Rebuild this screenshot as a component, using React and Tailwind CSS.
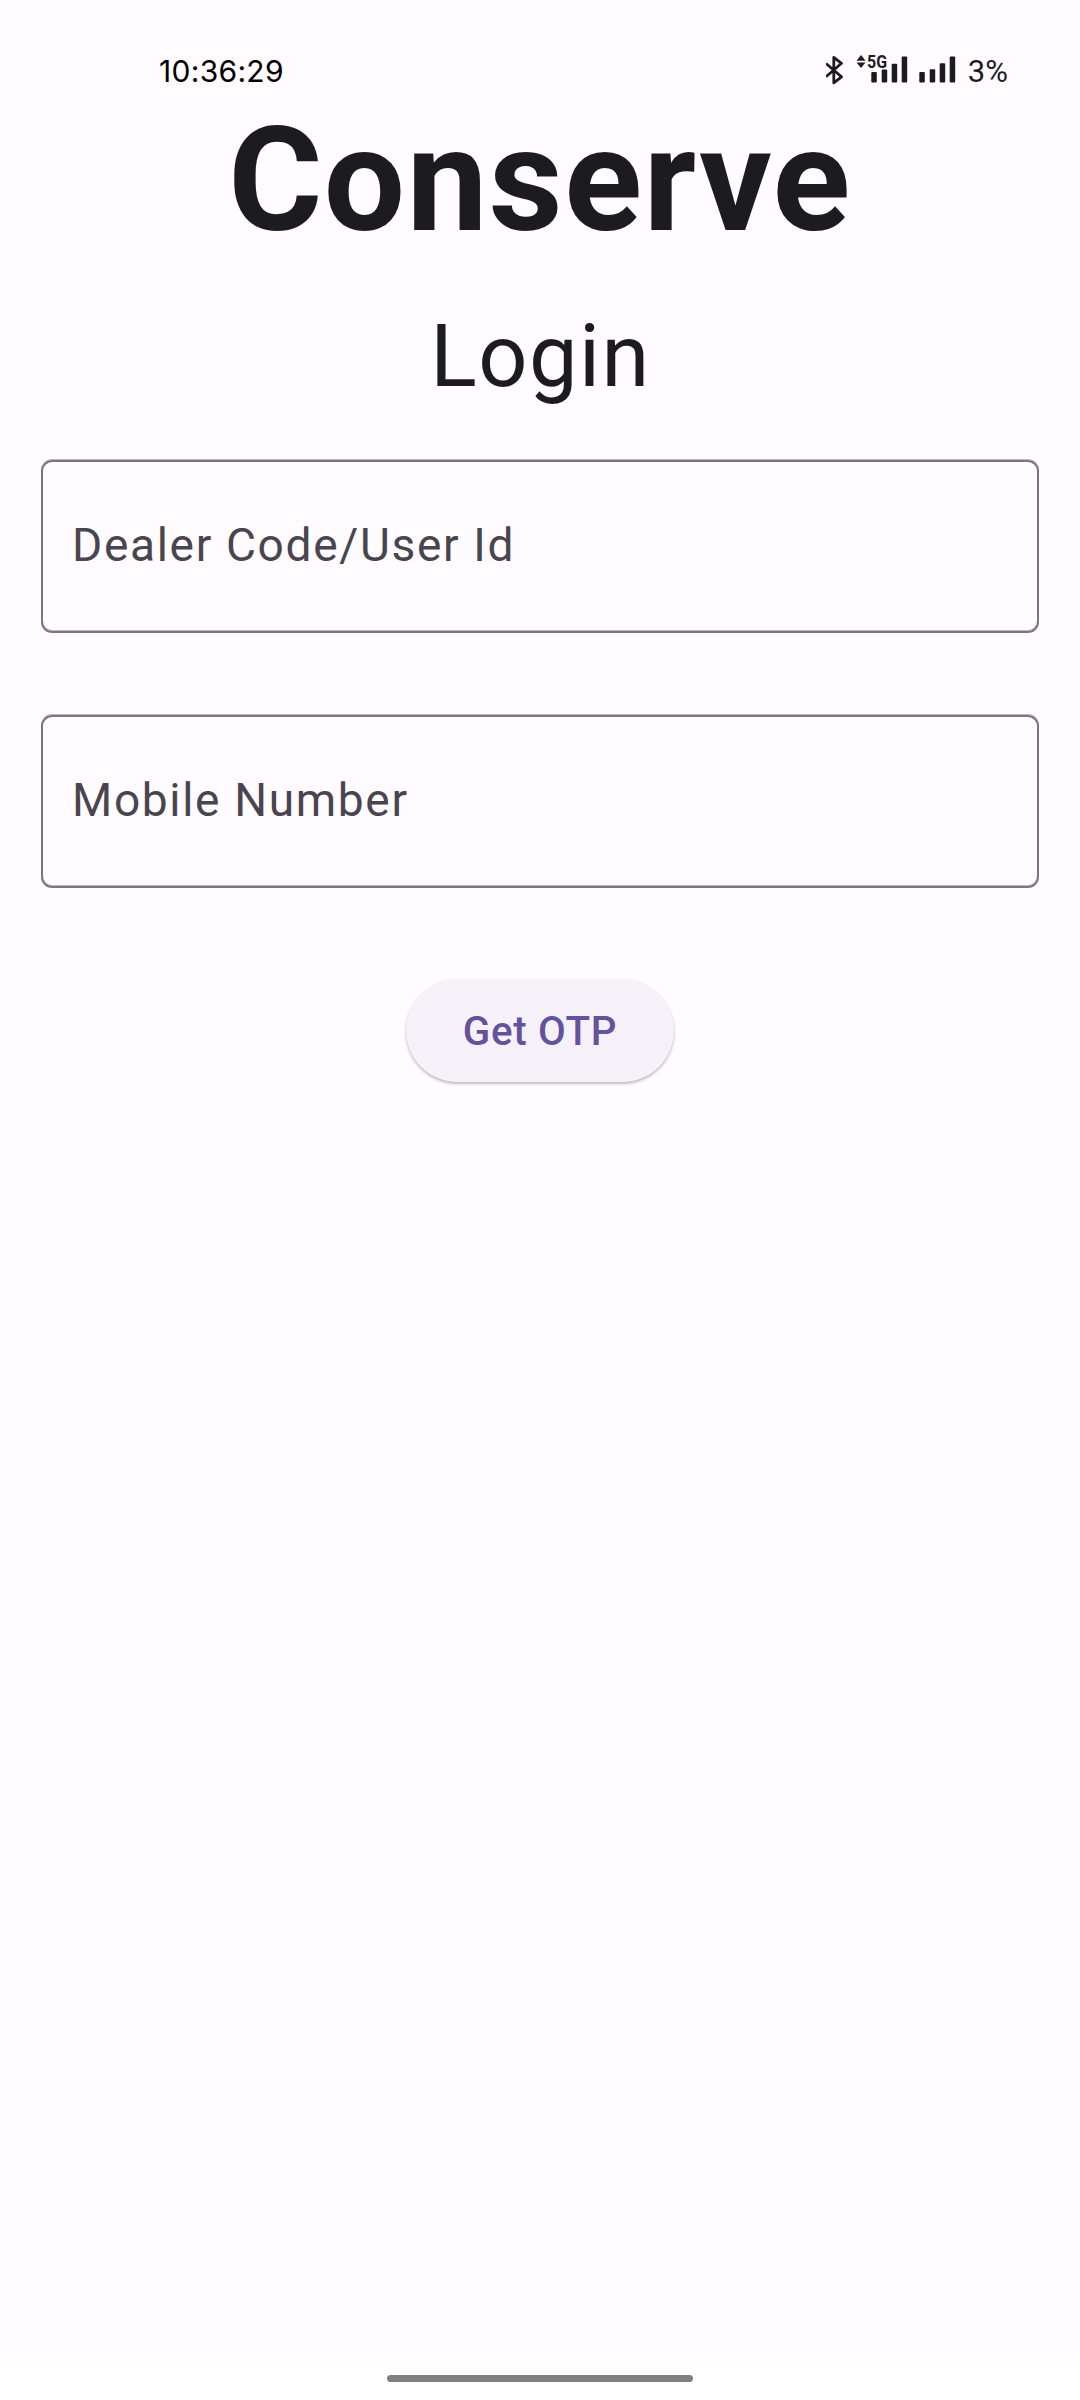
function StatusBar() {
  return (
    <header className="flex h-[118px] items-start justify-between pl-[159px] pr-[72px] pt-[50px] text-[#1c1b1f]">
      <span className="font-[Inter,sans-serif] text-[30px] leading-[42px] tracking-[0.3px] text-black">10:36:29</span>
      <div className="flex h-[42px] items-center">
        <svg className="h-[42px] w-[142px]" viewBox="0 0 142 42" fill="currentColor">
          {/* bluetooth */}
          <path
            d="M0 13.5 15.5 26.8 7.8 32.8V7.3L15.5 13.3 0 26.8"
            fill="none"
            stroke="currentColor"
            strokeWidth="2.8"
            strokeLinejoin="round"
          />
          {/* data arrows */}
          <path d="M30.5 10.8 35 5 39.5 10.8ZM30.5 12.5h9L35 18Z" />
          <text x="41" y="18" fontSize="18" fontWeight="700" fontFamily="Roboto, sans-serif" textLength="20" lengthAdjust="spacingAndGlyphs">
            5G
          </text>
          {/* sim 1 */}
          <rect x="45.3" y="22" width="5.5" height="10.5" rx="1" />
          <rect x="55.7" y="19.5" width="5.5" height="13" rx="1" />
          <rect x="65.7" y="13.7" width="5.5" height="18.8" rx="1" />
          <rect x="75.7" y="6.5" width="5.5" height="26" rx="1" />
          {/* sim 2 */}
          <rect x="93.3" y="22" width="5.5" height="10.5" rx="1" />
          <rect x="103.7" y="19.2" width="5.5" height="13.3" rx="1" />
          <rect x="113.7" y="13.3" width="5.5" height="19.2" rx="1" />
          <rect x="123.7" y="6.5" width="5.5" height="26" rx="1" />
        </svg>
        <span className="pt-[2px] font-[Roboto,sans-serif] text-[31px] leading-[42px]">3%</span>
      </div>
    </header>
  );
}

function Field({ label }) {
  return (
    <div className="flex h-[173px] items-center rounded-[11px] border-2 border-[#7c757e] pb-[4px] pl-[29px] shadow-[0_-1px_0_#7c757e80,inset_0_-1px_0_#7c757e80]">
      <label className="text-[46.08px] leading-[56px] tracking-[1.65px] text-[#49454e]">{label}</label>
    </div>
  );
}

export default function App() {
  return (
    <div className="flex h-[2400px] w-[1080px] flex-col bg-[#fffbff] font-[Roboto,sans-serif] text-[#1c1b1f]">
      <StatusBar />
      <main className="flex flex-1 flex-col px-[41px]">
        <h1 className="mt-[1px] text-center text-[144px] font-bold leading-[124px] tracking-[1.5px]">Conserve</h1>
        <h2 className="mt-[64px] pl-[1px] text-center text-[86.4px] leading-[100px] tracking-[1.5px]">Login</h2>
        <form className="mt-[53px] flex flex-col gap-[82px]">
          <Field label="Dealer Code/User Id" />
          <Field label="Mobile Number" />
          <button
            type="button"
            className="mt-[9px] h-[103px] w-[268px] self-center rounded-full bg-[#f6f1f8] pt-[3px] text-[40.3px] font-medium tracking-[0.7px] text-[#65529c] shadow-[0_2px_3px_rgba(0,0,0,0.26)]"
          >
            Get OTP
          </button>
        </form>
      </main>
      <footer className="flex h-[40px] justify-center bg-white pt-[15px]">
        <div className="h-[7px] w-[306px] rounded-full bg-[#808080]" />
      </footer>
    </div>
  );
}
